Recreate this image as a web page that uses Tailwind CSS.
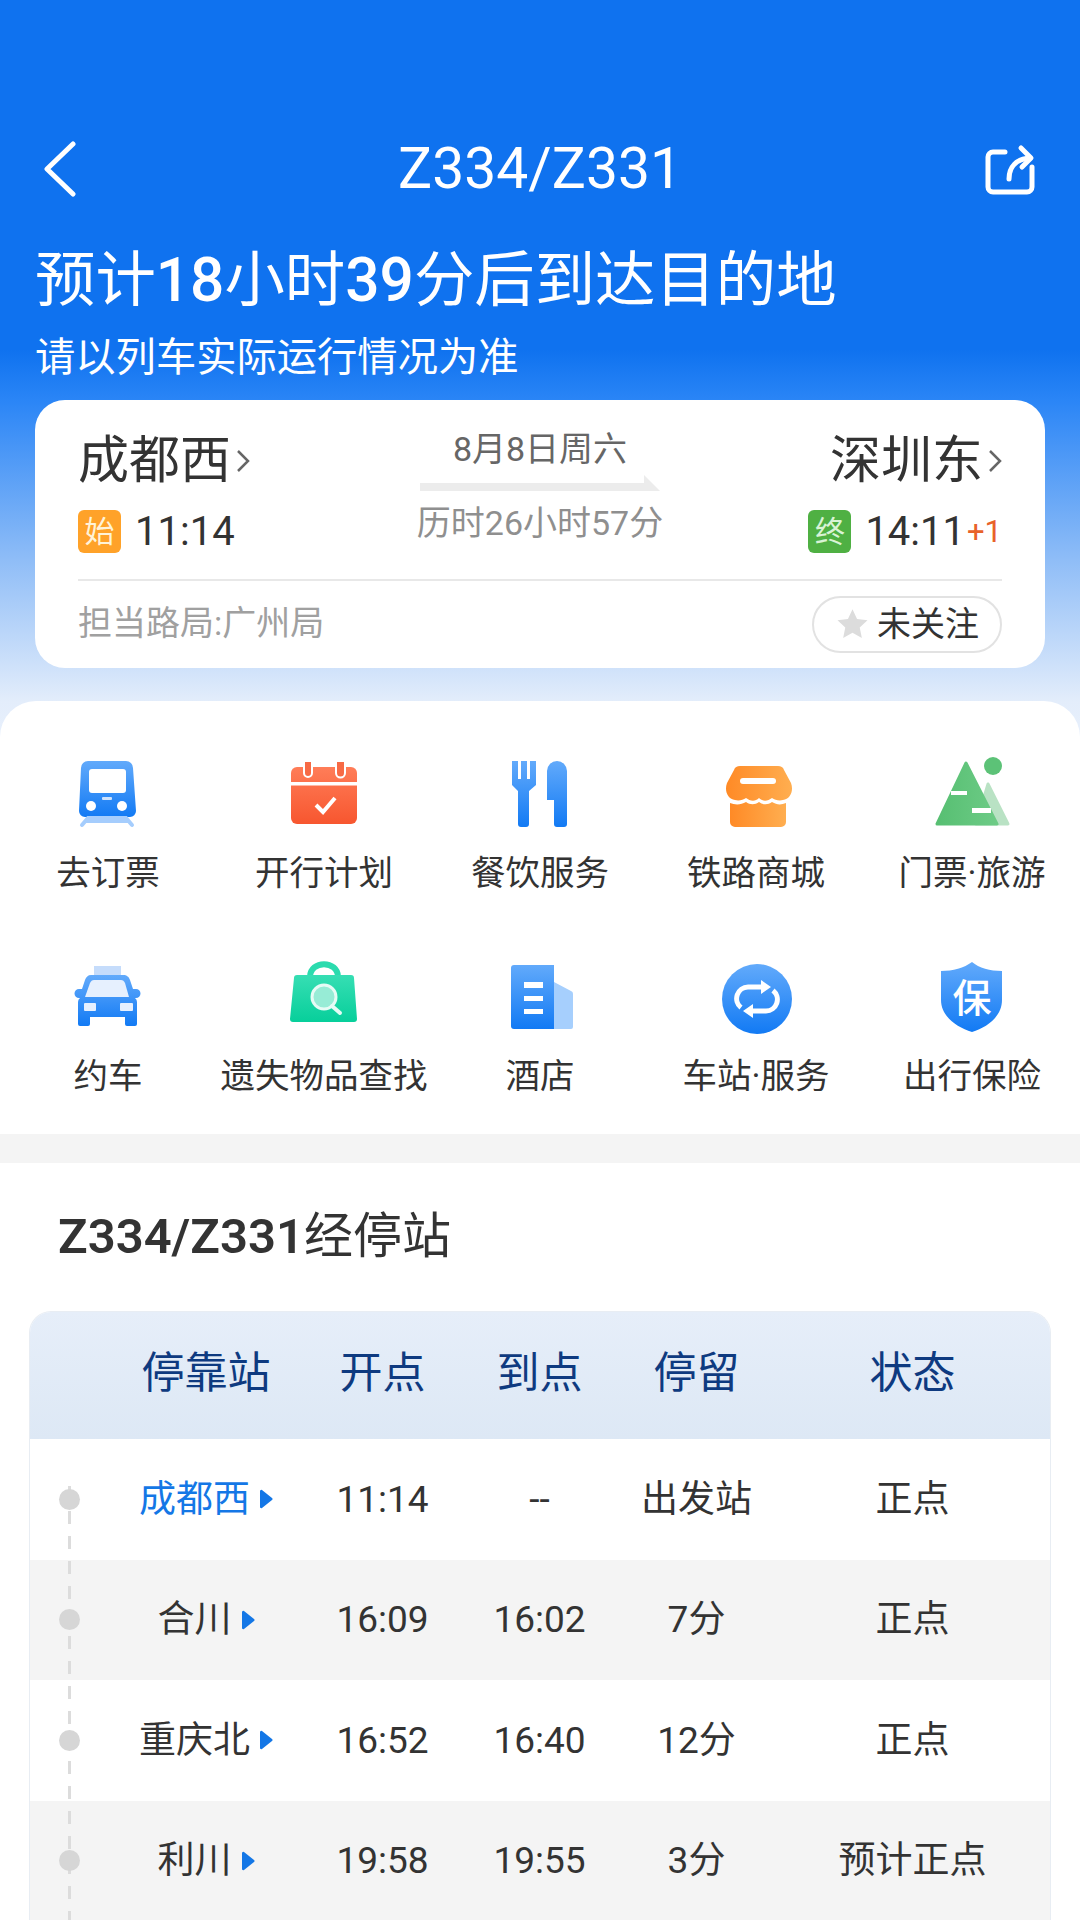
<!DOCTYPE html>
<html lang="zh-CN">
<head>
<meta charset="utf-8">
<title>Z334/Z331</title>
<script src="https://cdn.jsdelivr.net/npm/@tailwindcss/browser@4"></script>
</head>
<body class="m-0 bg-white">
<svg width="0" height="0" class="absolute">
    <defs>
        <linearGradient id="blue" x1="0" y1="0" x2="0" y2="1"><stop offset="0" stop-color="#62aafb"/><stop offset="1" stop-color="#127af4"/></linearGradient>
        <linearGradient id="red" x1="0" y1="0" x2="0" y2="1"><stop offset="0" stop-color="#ff7d58"/><stop offset="1" stop-color="#f7562f"/></linearGradient>
        <linearGradient id="orange" x1="0" y1="0" x2="1" y2="0"><stop offset="0" stop-color="#ff8a26"/><stop offset="1" stop-color="#ffae50"/></linearGradient>
        <linearGradient id="green" x1="0" y1="0" x2="1" y2="0"><stop offset="0" stop-color="#57bf72"/><stop offset="1" stop-color="#6dcb86"/></linearGradient>
        <linearGradient id="mint" x1="0" y1="0" x2="0" y2="1"><stop offset="0" stop-color="#36deb3"/><stop offset="1" stop-color="#07cf9b"/></linearGradient>
    </defs>
</svg>
<div class="relative h-[1920px] w-[1080px] overflow-hidden font-['Roboto','Noto_Sans_CJK_SC',sans-serif] text-[#333]">
    <!-- blue header, runs on under the rounded corners of the grid below -->
    <div class="h-[737px] bg-[linear-gradient(to_bottom,#0f72ef_0,#0f72ef_350px,#2a85f6_400px,#8fbdf7_560px,#e3edfb_701px,#e8f0fc_737px)] px-[35px] pt-[131px] text-white">
        <div class="grid h-[76px] grid-cols-[1fr_auto_1fr] items-center px-[8px]">
            <svg class="h-[56px] w-[34px]" viewBox="0 0 34 56" fill="none" stroke="white" stroke-width="5" stroke-linecap="round" stroke-linejoin="round"><path d="M30 3 4 28l26 25"/></svg>
            <span class="text-[57px] leading-[76px]">Z334/Z331</span>
            <svg class="mr-[2px] h-[52px] w-[50px] justify-self-end" viewBox="0 0 50 52" fill="none" stroke="white" stroke-width="5" stroke-linecap="round" stroke-linejoin="round"><path d="M20 9H8a5 5 0 0 0-5 5v30a5 5 0 0 0 5 5h34a5 5 0 0 0 5-5V24"/><path d="M24 36c0-12 7-20 21-21"/><path d="M36 5l10 10-9 9"/></svg>
        </div>
        <div class="mt-[38px] flex h-[72px] items-center text-[60.400px] leading-[72px] whitespace-nowrap"><span>预计<b class="font-medium">18</b>小时<b class="font-medium">39</b>分后到达目的地</span></div>
        <div class="mt-[16px] text-[40.300px] leading-[50px]">请以列车实际运行情况为准</div>
        <!-- route card -->
        <div class="mt-[17px] h-[268px] rounded-[30px] bg-white pl-[43px] pr-[43px] text-[#333]">
            <div class="grid h-[181px] grid-cols-[1fr_260px_1fr] border-b-2 border-[#e8e8e8]">
                <div class="pt-[31px]">
                    <div class="flex items-center text-[51px] leading-[60px]">成都西
                        <svg class="ml-[5px] h-[24px] w-[14px]" viewBox="0 0 14 24" fill="none" stroke="#666" stroke-width="2.5"><path d="m2 2 10 10L2 22"/></svg>
                    </div>
                    <div class="mt-[19px] flex items-center">
                        <span class="flex h-[43px] w-[43px] items-center justify-center rounded-[6px] bg-[#ffa229] text-[30px] text-[#fff3d8]">始</span>
                        <span class="ml-[14px] text-[40px] leading-[43px]">11:14</span>
                    </div>
                </div>
                <div class="pt-[27px] text-center">
                    <div class="text-[34px] leading-[44px] text-[#666]">8月8日周六</div>
                    <svg class="ml-[10px] mt-[4px] block h-[16px] w-[240px]" viewBox="0 0 240 16"><path d="M0 8h224V0l16 16H0z" fill="#ececec"/></svg>
                    <div class="mt-[10px] text-[34px] leading-[44px] text-[#8f8f8f]">历时26小时57分</div>
                </div>
                <div class="pt-[31px]">
                    <div class="flex items-center justify-end text-[51px] leading-[60px]">深圳东
                        <svg class="ml-[5px] h-[24px] w-[14px]" viewBox="0 0 14 24" fill="none" stroke="#666" stroke-width="2.5"><path d="m2 2 10 10L2 22"/></svg>
                    </div>
                    <div class="mt-[19px] flex items-center justify-end">
                        <span class="flex h-[43px] w-[43px] items-center justify-center rounded-[6px] bg-[#4fb043] text-[30px] text-[#d9f3d5]">终</span>
                        <span class="ml-[14px] text-[40px] leading-[43px]">14:11</span>
                        <span class="ml-[2px] text-[31px] leading-[43px] text-[#e8622a]">+1</span>
                    </div>
                </div>
            </div>
            <div class="flex h-[87px] items-center justify-between">
                <span class="-mt-[3px] text-[34px] leading-[44px] text-[#a0a0a0]">担当路局:广州局</span>
                <span class="-mt-[1px] flex h-[57px] w-[190px] items-center justify-center rounded-full border-2 border-[#e2e2e2] text-[34px]">
                    <svg class="mr-[7px] h-[34px] w-[35px]" viewBox="0 0 24 24" fill="#dcdcdc"><path d="m12 1.500 3.200 6.900 7.400.9-5.500 5.100 1.500 7.400L12 18.100l-6.600 3.700 1.500-7.400L1.400 9.300l7.400-.9z"/></svg>未关注
                </span>
            </div>
        </div>
    </div>
    <!-- shortcut grid -->
    <div class="relative z-10 -mt-[36px] grid h-[433px] auto-rows-[203px] grid-cols-5 rounded-t-[36px] bg-white pt-[56px] text-[34.500px] leading-[40px]">
        <div class="flex flex-col items-center">
            <svg class="h-[80px] w-[80px]" viewBox="0 0 80 80"><path d="M20 4h38a7 7 0 0 1 7 7l3 43a6 6 0 0 1-6 6H17a6 6 0 0 1-6-6l2-43a7 7 0 0 1 7-7z" fill="url(#blue)"/><rect x="21" y="12" width="37" height="24" rx="3" fill="#fff"/><circle cx="23" cy="49" r="5" fill="#fff"/><circle cx="54" cy="49" r="5" fill="#fff"/><rect x="34" y="40" width="10" height="3" rx="1" fill="#cfe3fd"/><path d="M14 68l6-7h38l6 7M18 64h42" fill="none" stroke="#a5cdfd" stroke-width="4" stroke-linecap="round"/></svg>
            <span class="mt-[16px]">去订票</span>
        </div>
        <div class="flex flex-col items-center">
            <svg class="h-[80px] w-[80px]" viewBox="0 0 80 80"><rect x="7" y="10" width="66" height="57" rx="6" fill="url(#red)"/><rect x="7" y="25" width="66" height="3.500" fill="#fff"/><path d="M20 4h8v12a4 4 0 0 1-8 0zM52 4h9v12a4.500 4.500 0 0 1-9 0z" fill="#f76a45" stroke="#fff" stroke-width="2"/><path d="m32 48 7 7 12-14" fill="none" stroke="#fff" stroke-width="4"/></svg>
            <span class="mt-[16px]">开行计划</span>
        </div>
        <div class="flex flex-col items-center">
            <svg class="h-[80px] w-[80px]" viewBox="0 0 80 80"><path d="M12 4h6v18h3V4h6v18h3V4h6v24l-7 6v33a3 3 0 0 1-3 3h-5a3 3 0 0 1-3-3V34l-6-6z" fill="url(#blue)"/><path d="M47 14a10 10 0 0 1 20 0v53a3 3 0 0 1-3 3h-7a3 3 0 0 1-3-3V43h-7z" fill="url(#blue)"/></svg>
            <span class="mt-[16px]">餐饮服务</span>
        </div>
        <div class="flex flex-col items-center">
            <svg class="h-[80px] w-[80px]" viewBox="0 0 80 80"><path d="M24 9H62C65 9 67 10 68 13L75 26C78 34 74 42 67 43 63 44 59 43 56 41 52 44 47 45 43 41 39 45 34 44 30 41 27 43 23 44 19 43 12 42 8 34 11 26L18 13C19 10 21 9 24 9Z" fill="url(#orange)"/><rect x="24" y="21" width="36" height="6" rx="3" fill="#fff"/><path d="M14 46c5 2 11 2 16-1 4 3 9 3 13 0 4 3 9 3 13 0 5 3 9 3 14 1V65a5 5 0 0 1-5 5H19a5 5 0 0 1-5-5Z" fill="url(#orange)"/></svg>
            <span class="mt-[16px]">铁路商城</span>
        </div>
        <div class="flex flex-col items-center">
            <svg class="h-[80px] w-[80px]" viewBox="0 0 80 80"><path d="M56 27 76 67H44z" fill="#b9e2c4" stroke="#b9e2c4" stroke-width="3" stroke-linejoin="round"/><path d="M34 6 65 67H5z" fill="url(#green)" stroke="url(#green)" stroke-width="3" stroke-linejoin="round"/><circle cx="61" cy="9" r="9" fill="#5cc277"/><rect x="19" y="34" width="16" height="4" fill="#fff"/><rect x="40" y="51" width="19" height="5" fill="#fff"/></svg>
            <span class="mt-[16px] whitespace-nowrap">门票·旅游</span>
        </div>
        <div class="flex flex-col items-center">
            <svg class="h-[80px] w-[80px]" viewBox="0 0 80 80"><rect x="26" y="6" width="27" height="10" fill="#c5dcfb"/><path d="M24 15h31c4 0 6 2 7 5l3 9h3a4 4 0 0 1 0 9h-1a5 5 0 0 1 2 4v22a2 2 0 0 1-2 2h-8a2 2 0 0 1-2-2v-7H22v7a2 2 0 0 1-2 2h-8a2 2 0 0 1-2-2V42a5 5 0 0 1 2-4h-1a4 4 0 0 1 0-9h3l3-9c1-3 3-5 6-5z" fill="url(#blue)"/><path d="M26 20h27c2 0 3 1 4 3l4 14H17l5-14c1-2 2-3 4-3z" fill="#e6f0fe"/><rect x="16" y="43" width="12" height="8" rx="1" fill="#e6f0fe"/><rect x="52" y="43" width="13" height="8" rx="1" fill="#e6f0fe"/></svg>
            <span class="mt-[16px]">约车</span>
        </div>
        <div class="flex flex-col items-center">
            <svg class="h-[80px] w-[80px]" viewBox="0 0 80 80"><path d="M26 17C26 0 54 0 54 17" fill="none" stroke="#2bdbae" stroke-width="6"/><path d="M13 15h54a3 3 0 0 1 3 3l3 41a3 3 0 0 1-3 3H9a3 3 0 0 1-3-3l4-41a3 3 0 0 1 3-3z" fill="url(#mint)"/><circle cx="40" cy="37" r="12" fill="#97ecd6" stroke="#e6fbf5" stroke-width="3"/><path d="m48 46 8 7" stroke="#e6fbf5" stroke-width="4" stroke-linecap="round"/></svg>
            <span class="mt-[16px]">遗失物品查找</span>
        </div>
        <div class="flex flex-col items-center">
            <svg class="h-[80px] w-[80px]" viewBox="0 0 80 80"><path d="M54 22 71 31a3 3 0 0 1 2 3v33a2 2 0 0 1-2 2H54z" fill="#a6cffd"/><path d="M14 5h40v64H14a3 3 0 0 1-3-3V8a3 3 0 0 1 3-3z" fill="url(#blue)"/><rect x="24" y="22" width="19" height="6" fill="#fff"/><rect x="24" y="36" width="19" height="5" fill="#fff"/><rect x="24" y="49" width="19" height="5" fill="#fff"/></svg>
            <span class="mt-[16px]">酒店</span>
        </div>
        <div class="flex flex-col items-center">
            <svg class="h-[80px] w-[80px]" viewBox="0 0 80 80"><circle cx="41" cy="39" r="35" fill="url(#blue)"/><path d="M46 27H32a11.500 11.500 0 0 0-7 20.500M36 51h14a11.500 11.500 0 0 0 7-20.500" fill="none" stroke="#fff" stroke-width="5"/><path d="m45 20 10 7-10 7zM37 44l-10 7 10 7z" fill="#fff"/></svg>
            <span class="mt-[16px] whitespace-nowrap">车站·服务</span>
        </div>
        <div class="flex flex-col items-center">
            <svg class="h-[80px] w-[80px]" viewBox="0 0 80 80"><path d="M40 2c7 6 18 9 30 9v29c0 16-14 27-30 32C24 67 9 56 9 40V11c12 0 23-3 31-9z" fill="url(#blue)"/><text x="40" y="52" text-anchor="middle" font-size="39" font-weight="500" fill="#fff" font-family="Noto Sans CJK SC">保</text></svg>
            <span class="mt-[16px]">出行保险</span>
        </div>
    </div>
    <div class="h-[29px] bg-[#f4f4f4]"></div>
    <!-- stops -->
    <div class="bg-white px-[29px]">
        <div class="flex h-[148px] items-center pl-[29px] text-[49px] leading-[60px] text-[#333]"><b class="font-semibold">Z334/Z331</b>经停站</div>
        <div class="overflow-hidden rounded-t-[22px] border-x border-t border-[#e8edf3]">
            <div class="grid h-[127px] grid-cols-[78px_196px_157px_157px_157px_1fr] items-center bg-[linear-gradient(to_bottom,#e6eef9,#dde8f5)] pb-[5px] text-center text-[43px] text-[#0e3a80]">
                <span></span><span>停靠站</span><span>开点</span><span>到点</span><span>停留</span><span>状态</span>
            </div>
            <div class="relative text-center text-[37px] text-[#333]">
                <div class="absolute bottom-0 left-[38px] top-[47px] w-[3px] bg-[repeating-linear-gradient(to_bottom,#dcdcdc_0,#dcdcdc_13px,transparent_13px,transparent_25px)]"></div>
                <div class="grid h-[120.500px] grid-cols-[78px_196px_157px_157px_157px_1fr] items-center bg-white">
                    <span class="relative ml-[29px] h-[21px] w-[21px] rounded-full bg-[#d6d6d6]"></span>
                    <span class="flex items-center justify-center gap-[10px] text-[#1477e6]">成都西<svg class="h-[20px] w-[13px]" viewBox="0 0 13 20"><path d="M2 1 12 9a1.300 1.300 0 0 1 0 2L2 19a1.300 1.300 0 0 1-2-1V2a1.300 1.300 0 0 1 2-1z" fill="#1477e6"/></svg></span>
                    <span>11:14</span><span>--</span><span>出发站</span><span>正点</span>
                </div>
                <div class="grid h-[120.500px] grid-cols-[78px_196px_157px_157px_157px_1fr] items-center bg-[#f4f4f4]">
                    <span class="relative ml-[29px] h-[21px] w-[21px] rounded-full bg-[#d6d6d6]"></span>
                    <span class="flex items-center justify-center gap-[10px]">合川<svg class="h-[20px] w-[13px]" viewBox="0 0 13 20"><path d="M2 1 12 9a1.300 1.300 0 0 1 0 2L2 19a1.300 1.300 0 0 1-2-1V2a1.300 1.300 0 0 1 2-1z" fill="#1477e6"/></svg></span>
                    <span>16:09</span><span>16:02</span><span>7分</span><span>正点</span>
                </div>
                <div class="grid h-[120.500px] grid-cols-[78px_196px_157px_157px_157px_1fr] items-center bg-white">
                    <span class="relative ml-[29px] h-[21px] w-[21px] rounded-full bg-[#d6d6d6]"></span>
                    <span class="flex items-center justify-center gap-[10px]">重庆北<svg class="h-[20px] w-[13px]" viewBox="0 0 13 20"><path d="M2 1 12 9a1.300 1.300 0 0 1 0 2L2 19a1.300 1.300 0 0 1-2-1V2a1.300 1.300 0 0 1 2-1z" fill="#1477e6"/></svg></span>
                    <span>16:52</span><span>16:40</span><span>12分</span><span>正点</span>
                </div>
                <div class="grid h-[120.500px] grid-cols-[78px_196px_157px_157px_157px_1fr] items-center bg-[#f4f4f4]">
                    <span class="relative ml-[29px] h-[21px] w-[21px] rounded-full bg-[#d6d6d6]"></span>
                    <span class="flex items-center justify-center gap-[10px]">利川<svg class="h-[20px] w-[13px]" viewBox="0 0 13 20"><path d="M2 1 12 9a1.300 1.300 0 0 1 0 2L2 19a1.300 1.300 0 0 1-2-1V2a1.300 1.300 0 0 1 2-1z" fill="#1477e6"/></svg></span>
                    <span>19:58</span><span>19:55</span><span>3分</span><span>预计正点</span>
                </div>
            </div>
        </div>
    </div>
</div>
</body>
</html>
